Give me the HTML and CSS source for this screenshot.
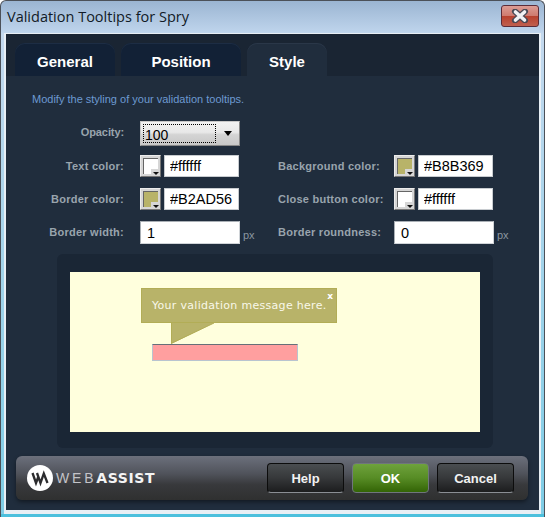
FILE: index.html

```html
<!DOCTYPE html>
<html lang="en">
<head>
    <meta charset="UTF-8">
    <title>Validation Tooltips for Spry</title>
    <link rel="stylesheet" href="styles.css">
</head>
<body>
    <div class="window">
        <div class="titlebar">
            <span class="title">Validation Tooltips for Spry</span>
            <div class="close-btn">
                <svg width="18" height="14" viewBox="0 0 18 14">
                    <path d="M4 2.5 L14 11.5 M14 2.5 L4 11.5" stroke="#4a4a55" stroke-width="6" stroke-linecap="round"/>
                    <path d="M4.5 3 L13.5 11 M13.5 3 L4.5 11" stroke="#f2f2f4" stroke-width="3.6" stroke-linecap="round"/>
                </svg>
            </div>
        </div>
        <div class="client">
            <div class="tabs">
                <div class="tab tab-general">General</div>
                <div class="tab tab-position">Position</div>
                <div class="tab tab-style active">Style</div>
            </div>
            <div class="panel">
                <p class="intro">Modify the styling of your validation tooltips.</p>
                <div class="form-row opacity-row">
                    <label class="label">Opacity:</label>
                    <div class="select">
                        <span class="select-value">100</span>
                        <span class="select-arrow"></span>
                    </div>
                </div>
                <div class="form-row first-row">
                    <label class="label">Text color:</label>
                    <div class="swatch"><span class="chip chip-white"></span></div>
                    <input class="field hex" type="text" value="#ffffff">
                    <label class="label label-right">Background color:</label>
                    <div class="swatch"><span class="chip chip-olive"></span></div>
                    <input class="field hex" type="text" value="#B8B369">
                </div>
                <div class="form-row">
                    <label class="label">Border color:</label>
                    <div class="swatch"><span class="chip chip-olive"></span></div>
                    <input class="field hex" type="text" value="#B2AD56">
                    <label class="label label-right">Close button color:</label>
                    <div class="swatch"><span class="chip chip-white"></span></div>
                    <input class="field hex" type="text" value="#ffffff">
                </div>
                <div class="form-row size-row">
                    <label class="label">Border width:</label>
                    <input class="field wide" type="text" value="1">
                    <span class="unit">px</span>
                    <label class="label label-right">Border roundness:</label>
                    <input class="field wide" type="text" value="0">
                    <span class="unit">px</span>
                </div>
                <div class="preview">
                    <div class="preview-page">
                        <div class="tooltip">
                            <span class="tooltip-close">x</span>
                            Your validation message here.
                            <svg class="tooltip-tail" width="44" height="21" viewBox="0 0 44 21">
                                <path d="M0 0 V21 L43 0 Z" fill="#b8b369"/>
                                <path d="M0.5 0 V20" stroke="#b2ad56"/>
                                <path d="M0 20.5 L43 0" stroke="#b2ad56"/>
                            </svg>
                        </div>
                        <div class="fake-input"></div>
                    </div>
                </div>
                <div class="footer">
                    <div class="brand">
                        <svg class="brand-mark" width="28" height="28" viewBox="0 0 28 28">
                            <circle cx="14" cy="14" r="13" fill="#fff"/>
                            <path d="M6.5 9 L10 19 L12.6 12 M11 9 L14.5 19 L17.8 9.5 L21.5 19" fill="none" stroke="#2c2c2e" stroke-width="2.3"/>
                        </svg>
                        <span class="brand-name"><span class="brand-thin">WEB</span>ASSIST</span>
                    </div>
                    <button class="btn">Help</button>
                    <button class="btn btn-ok">OK</button>
                    <button class="btn">Cancel</button>
                </div>
            </div>
        </div>
    </div>
</body>
</html>
```

FILE: styles.css

```css
html, body {
    margin: 0;
    padding: 0;
    background: #fff;
}
.window {
    box-sizing: border-box;
    width: 545px;
    height: 517px;
    border: 1px solid #4c5159;
    border-bottom: 0;
    border-radius: 6px 6px 0 0;
    padding: 0 3px 3px 3px;
    background: linear-gradient(to bottom, #9bb5d2 0, #bdd3eb 30px, #c4d9ee 33px, #7fcde6 500px);
    box-shadow: inset 0 -3px 0 #4cc0dd;
    display: flex;
    flex-direction: column;
}
.titlebar {
    height: 32px;
    display: flex;
    justify-content: space-between;
    flex-shrink: 0;
}
.title {
    font-family: "Open Sans", sans-serif;
    font-size: 14.5px;
    line-height: 31px;
    color: #111a26;
    padding-left: 3px;
}
.close-btn {
    box-sizing: border-box;
    width: 38px;
    height: 22px;
    margin: 4px 2px 0 0;
    border: 1px solid #5c2c38;
    border-radius: 3px;
    background: linear-gradient(to bottom, #dc9c94 0, #cf7b70 48%, #b8412f 52%, #c0604f 100%);
    display: flex;
    align-items: center;
    justify-content: center;
}
.client {
    flex: 1;
    background: #1a2533;
    border: 2px solid #e8eff5;
    border-width: 1px 2px 4px 2px;
    display: flex;
    flex-direction: column;
    min-height: 0;
}
.tabs {
    display: flex;
    gap: 6px;
    padding: 9px 0 0 9px;
    height: 33px;
    flex-shrink: 0;
}
.tab {
    font-family: "Liberation Sans", Arial, sans-serif;
    font-size: 15px;
    font-weight: bold;
    color: #fff;
    text-align: center;
    line-height: 38px;
    height: 33px;
    border-radius: 10px 10px 0 0;
    background: #122136;
    box-shadow: inset 0 1px 0 #1d2d44;
}
.tab-general { width: 100px; }
.tab-position { width: 120px; }
.tab-style { width: 80px; }
.tab.active {
    background: #202d3d;
    box-shadow: inset 0 1px 0 #2a3748;
}
.panel {
    flex: 1;
    background: #202d3d;
    padding: 0 9px 0 10px;
    display: flex;
    flex-direction: column;
}
.intro {
    font-family: "Liberation Sans", Arial, sans-serif;
    font-size: 11px;
    color: #6d9ad2;
    margin: 16px 0 0 16px;
    line-height: 14px;
    height: 14px;
}
.form-row {
    display: flex;
    align-items: center;
    height: 22px;
    margin-top: 11px;
}
.opacity-row {
    height: 25px;
    margin-top: 15px;
}
.opacity-row .label {
    letter-spacing: -0.1px;
    padding-bottom: 3px;
}
.first-row {
    margin-top: 9px;
}
.size-row {
    height: 23px;
}
.size-row .label {
    padding-bottom: 2px;
}
.label {
    font-family: "Liberation Sans", Arial, sans-serif;
    font-size: 11px;
    font-weight: bold;
    letter-spacing: 0.25px;
    color: #99a4ad;
    width: 108px;
    text-align: right;
    margin-right: 16px;
    flex-shrink: 0;
}
.label-right {
    width: 116px;
    text-align: left;
    margin: 0 0 0 39px;
}
.swatch {
    box-sizing: border-box;
    width: 21px;
    height: 22px;
    background: #d6d6d6;
    border: 1px solid #ececec;
    border-right-color: #777;
    border-bottom-color: #777;
    padding: 2px;
    position: relative;
    margin-right: 3px;
    flex-shrink: 0;
}
.swatch::after {
    content: "";
    position: absolute;
    right: 0;
    bottom: 0;
    width: 9px;
    height: 7px;
    background: #d6d6d6;
}
.swatch::before {
    content: "";
    position: absolute;
    z-index: 1;
    right: 1px;
    bottom: 1px;
    border: 3px solid transparent;
    border-top: 3px solid #111;
    border-bottom: 0;
}
.chip {
    display: block;
    width: 100%;
    height: 100%;
    box-shadow: inset 1px 1px 0 #666;
}
.chip-white { background: #fff; }
.chip-olive { background: #b8b369; }
.field {
    box-sizing: border-box;
    font-family: "Liberation Sans", Arial, sans-serif;
    font-size: 14.5px;
    color: #000;
    background: #fff;
    border: 1px solid #c8ccd0;
    outline: 0;
    margin: 0;
    flex-shrink: 0;
}
.hex {
    width: 75px;
    height: 22px;
    padding: 0 0 0 5px;
}
.wide {
    width: 100px;
    height: 23px;
    padding: 0 0 0 6px;
    border-color: #aab0b6 #d0d4d8 #d0d4d8 #aab0b6;
}
.unit {
    font-family: "Liberation Sans", Arial, sans-serif;
    font-size: 11px;
    color: #8a95a0;
    width: 0;
    margin-left: 3px;
    padding-top: 4px;
    white-space: nowrap;
}
.size-row .unit + .label-right {
    margin-left: 35px;
}
.select {
    box-sizing: border-box;
    width: 100px;
    height: 25px;
    border: 1px solid #c8c8c8;
    border-right-color: #888;
    border-bottom-color: #888;
    background: linear-gradient(to bottom, #f2f2f2 0, #e8e8e8 45%, #d4d4d4 55%, #c8c8c8 100%);
    padding: 2px;
    display: flex;
    align-items: stretch;
    font-family: "Liberation Sans", Arial, sans-serif;
    font-size: 14px;
    color: #000;
}
.select-value {
    box-sizing: border-box;
    width: 73px;
    border: 1px dotted #000;
    line-height: 21px;
    padding-left: 1px;
}
.select-arrow {
    width: 0;
    height: 0;
    margin: 7px 0 0 8px;
    border: 4px solid transparent;
    border-width: 5px 4px 0 4px;
    border-top-color: #000;
}
.preview {
    box-sizing: border-box;
    width: 436px;
    height: 194px;
    margin: 10px 0 0 41px;
    padding: 18px 13px 16px 13px;
    background: #1a2635;
    border-radius: 6px;
}
.preview-page {
    height: 160px;
    background: #ffffdd;
    padding: 16px 0 0 71px;
    box-sizing: border-box;
}
.tooltip {
    box-sizing: border-box;
    position: relative;
    width: 196px;
    height: 35px;
    background: #b8b369;
    border: 1px solid #b2ad56;
    padding-left: 10px;
    font-family: "DejaVu Sans", sans-serif;
    font-size: 11px;
    letter-spacing: 0.3px;
    line-height: 34px;
    color: #f8f8ea;
    white-space: nowrap;
}
.tooltip-close {
    position: absolute;
    top: 1px;
    right: 3px;
    font-size: 9px;
    font-weight: bold;
    letter-spacing: 0;
    line-height: 12px;
    color: #fff;
}
.tooltip-tail {
    position: absolute;
    left: 29px;
    top: 34px;
}
.fake-input {
    box-sizing: border-box;
    width: 146px;
    height: 17px;
    margin: 21px 0 0 11px;
    background: #ff9f9f;
    border: 1px solid #b8c4d0;
    border-top-color: #667078;
}
.footer {
    box-sizing: border-box;
    width: 512px;
    height: 44px;
    margin: 8px 0 0 0;
    border-radius: 6px;
    background: linear-gradient(to bottom, #6c707c 0, #50535b 40%, #38393c 65%, #2f3030 100%);
    box-shadow: 0 2px 4px rgba(0, 0, 0, 0.45);
    display: flex;
    align-items: center;
    gap: 8px;
    padding: 0 14px 0 10px;
}
.brand {
    flex: 1;
    display: flex;
    align-items: center;
    gap: 2px;
}
.brand-name {
    font-family: "DejaVu Sans", sans-serif;
    font-size: 14px;
    font-weight: bold;
    letter-spacing: 0.6px;
    color: #f4f4f4;
}
.brand-thin {
    font-family: "Liberation Sans", Arial, sans-serif;
    font-size: 14px;
    font-weight: normal;
    letter-spacing: 2.8px;
    color: #c4c4c8;
}
.btn {
    box-sizing: border-box;
    width: 77px;
    height: 30px;
    padding: 0;
    border: 1px solid #0c0c0c;
    border-bottom-color: #8a8e94;
    border-radius: 4px;
    background: linear-gradient(to bottom, #4a4d50 0, #36383a 50%, #1c1d1e 100%);
    font-family: "Liberation Sans", Arial, sans-serif;
    font-size: 13px;
    font-weight: bold;
    color: #f2f2f2;
}
.btn-ok {
    background: linear-gradient(to bottom, #6ea23c 0, #578c25 50%, #336405 100%);
    border-color: #6f767c;
    color: #fff;
}
```
